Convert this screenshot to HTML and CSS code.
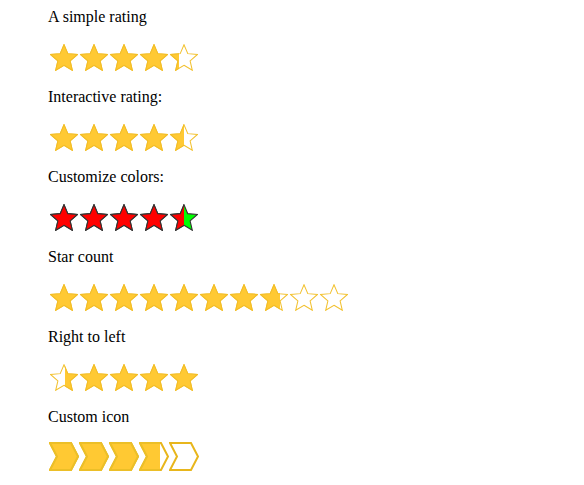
FILE: index.html
```html
<!DOCTYPE html>
<html>
<head>
<meta charset="utf-8">
<link rel="stylesheet" href="styles.css">
</head>
<body>
<svg class="defs" width="0" height="0">
  <defs>
    <symbol id="star" viewBox="1.6 1.6 20.8 19.8">
      <path d="M12 17.27L18.18 21l-1.64-7.03L22 9.24l-7.19-.61L12 2 9.19 8.63 2 9.24l5.46 4.73L5.82 21z"/>
    </symbol>
    <symbol id="arrow" viewBox="0 0 30 29">
      <path d="M1 1 H22 L29 14.5 L22 28 H1 L8 14.5 Z"/>
    </symbol>
  </defs>
</svg>
<main class="page">
  <section class="block">
    <p class="label">A simple rating</p>
    <div class="rating gold">
      <span class="item"><svg class="shape base"><use href="#star"/></svg><span class="fill" style="width:30px"><svg class="shape"><use href="#star"/></svg></span></span>
      <span class="item"><svg class="shape base"><use href="#star"/></svg><span class="fill" style="width:30px"><svg class="shape"><use href="#star"/></svg></span></span>
      <span class="item"><svg class="shape base"><use href="#star"/></svg><span class="fill" style="width:30px"><svg class="shape"><use href="#star"/></svg></span></span>
      <span class="item"><svg class="shape base"><use href="#star"/></svg><span class="fill" style="width:30px"><svg class="shape"><use href="#star"/></svg></span></span>
      <span class="item"><svg class="shape base"><use href="#star"/></svg><span class="fill" style="width:11px"><svg class="shape"><use href="#star"/></svg></span></span>
    </div>
  </section>
  <section class="block">
    <p class="label">Interactive rating:</p>
    <div class="rating gold">
      <span class="item"><svg class="shape base"><use href="#star"/></svg><span class="fill" style="width:30px"><svg class="shape"><use href="#star"/></svg></span></span>
      <span class="item"><svg class="shape base"><use href="#star"/></svg><span class="fill" style="width:30px"><svg class="shape"><use href="#star"/></svg></span></span>
      <span class="item"><svg class="shape base"><use href="#star"/></svg><span class="fill" style="width:30px"><svg class="shape"><use href="#star"/></svg></span></span>
      <span class="item"><svg class="shape base"><use href="#star"/></svg><span class="fill" style="width:30px"><svg class="shape"><use href="#star"/></svg></span></span>
      <span class="item"><svg class="shape base"><use href="#star"/></svg><span class="fill" style="width:16px"><svg class="shape"><use href="#star"/></svg></span></span>
    </div>
  </section>
  <section class="block">
    <p class="label">Customize colors:</p>
    <div class="rating custom">
      <span class="item"><svg class="shape base"><use href="#star"/></svg><span class="fill" style="width:30px"><svg class="shape"><use href="#star"/></svg></span></span>
      <span class="item"><svg class="shape base"><use href="#star"/></svg><span class="fill" style="width:30px"><svg class="shape"><use href="#star"/></svg></span></span>
      <span class="item"><svg class="shape base"><use href="#star"/></svg><span class="fill" style="width:30px"><svg class="shape"><use href="#star"/></svg></span></span>
      <span class="item"><svg class="shape base"><use href="#star"/></svg><span class="fill" style="width:30px"><svg class="shape"><use href="#star"/></svg></span></span>
      <span class="item"><svg class="shape base"><use href="#star"/></svg><span class="fill" style="width:16px"><svg class="shape"><use href="#star"/></svg></span></span>
    </div>
  </section>
  <section class="block">
    <p class="label">Star count</p>
    <div class="rating gold">
      <span class="item"><svg class="shape base"><use href="#star"/></svg><span class="fill" style="width:30px"><svg class="shape"><use href="#star"/></svg></span></span>
      <span class="item"><svg class="shape base"><use href="#star"/></svg><span class="fill" style="width:30px"><svg class="shape"><use href="#star"/></svg></span></span>
      <span class="item"><svg class="shape base"><use href="#star"/></svg><span class="fill" style="width:30px"><svg class="shape"><use href="#star"/></svg></span></span>
      <span class="item"><svg class="shape base"><use href="#star"/></svg><span class="fill" style="width:30px"><svg class="shape"><use href="#star"/></svg></span></span>
      <span class="item"><svg class="shape base"><use href="#star"/></svg><span class="fill" style="width:30px"><svg class="shape"><use href="#star"/></svg></span></span>
      <span class="item"><svg class="shape base"><use href="#star"/></svg><span class="fill" style="width:30px"><svg class="shape"><use href="#star"/></svg></span></span>
      <span class="item"><svg class="shape base"><use href="#star"/></svg><span class="fill" style="width:30px"><svg class="shape"><use href="#star"/></svg></span></span>
      <span class="item"><svg class="shape base"><use href="#star"/></svg><span class="fill" style="width:22px"><svg class="shape"><use href="#star"/></svg></span></span>
      <span class="item"><svg class="shape base"><use href="#star"/></svg></span>
      <span class="item"><svg class="shape base"><use href="#star"/></svg></span>
    </div>
  </section>
  <section class="block">
    <p class="label">Right to left</p>
    <div class="rating gold">
      <span class="item"><svg class="shape base"><use href="#star"/></svg><span class="fill rtl" style="width:13px"><svg class="shape"><use href="#star"/></svg></span></span>
      <span class="item"><svg class="shape base"><use href="#star"/></svg><span class="fill" style="width:30px"><svg class="shape"><use href="#star"/></svg></span></span>
      <span class="item"><svg class="shape base"><use href="#star"/></svg><span class="fill" style="width:30px"><svg class="shape"><use href="#star"/></svg></span></span>
      <span class="item"><svg class="shape base"><use href="#star"/></svg><span class="fill" style="width:30px"><svg class="shape"><use href="#star"/></svg></span></span>
      <span class="item"><svg class="shape base"><use href="#star"/></svg><span class="fill" style="width:30px"><svg class="shape"><use href="#star"/></svg></span></span>
    </div>
  </section>
  <section class="block">
    <p class="label">Custom icon</p>
    <div class="rating gold arrows">
      <span class="item"><svg class="shape base"><use href="#arrow"/></svg><span class="fill" style="width:32px"><svg class="shape"><use href="#arrow"/></svg></span></span>
      <span class="item"><svg class="shape base"><use href="#arrow"/></svg><span class="fill" style="width:32px"><svg class="shape"><use href="#arrow"/></svg></span></span>
      <span class="item"><svg class="shape base"><use href="#arrow"/></svg><span class="fill" style="width:32px"><svg class="shape"><use href="#arrow"/></svg></span></span>
      <span class="item"><svg class="shape base"><use href="#arrow"/></svg><span class="fill" style="width:22px"><svg class="shape"><use href="#arrow"/></svg></span></span>
      <span class="item"><svg class="shape base"><use href="#arrow"/></svg></span>
    </div>
  </section>
</main>
</body>
</html>
```
FILE: styles.css
```css
html, body {
  background: #ffffff;
}
body {
  margin: 8px;
  font-family: "Liberation Serif", "Times New Roman", serif;
  font-size: 16px;
  color: #000000;
}
.defs {
  position: absolute;
  width: 0;
  height: 0;
  overflow: hidden;
}
.page {
  padding-left: 40px;
}
.block {
  height: 80px;
}
.label {
  margin: 0;
  line-height: 18px;
  height: 18px;
}
.rating {
  display: flex;
  margin-top: 16px;
  height: 30px;
}
.item {
  position: relative;
  width: 30px;
  height: 30px;
  flex: none;
}
.shape {
  position: absolute;
  left: 2px;
  top: 2px;
  width: 28px;
  height: 27px;
  overflow: visible;
}
.fill {
  position: absolute;
  left: 0;
  top: 0;
  height: 30px;
  overflow: hidden;
}
.fill.rtl {
  left: auto;
  right: 0;
}
.fill.rtl .shape {
  left: auto;
  right: 0;
}
.gold .base {
  fill: #ffffff;
  stroke: #f2c12e;
  stroke-width: 0.75px;
}
.gold .fill .shape {
  fill: #ffc933;
  stroke: #f2bd26;
  stroke-width: 0.75px;
}
.custom .base {
  fill: #00ff00;
  stroke: #333333;
  stroke-width: 0.8px;
}
.custom .fill .shape {
  fill: #ff0000;
  stroke: #333333;
  stroke-width: 0.8px;
}
.arrows .shape {
  left: 1px;
  top: 0px;
  width: 30px;
  height: 29px;
}
.arrows .base {
  stroke: #e8b61c;
  stroke-width: 2px;
}
.arrows .fill .shape {
  stroke: #ecbf28;
  stroke-width: 2px;
}
```
